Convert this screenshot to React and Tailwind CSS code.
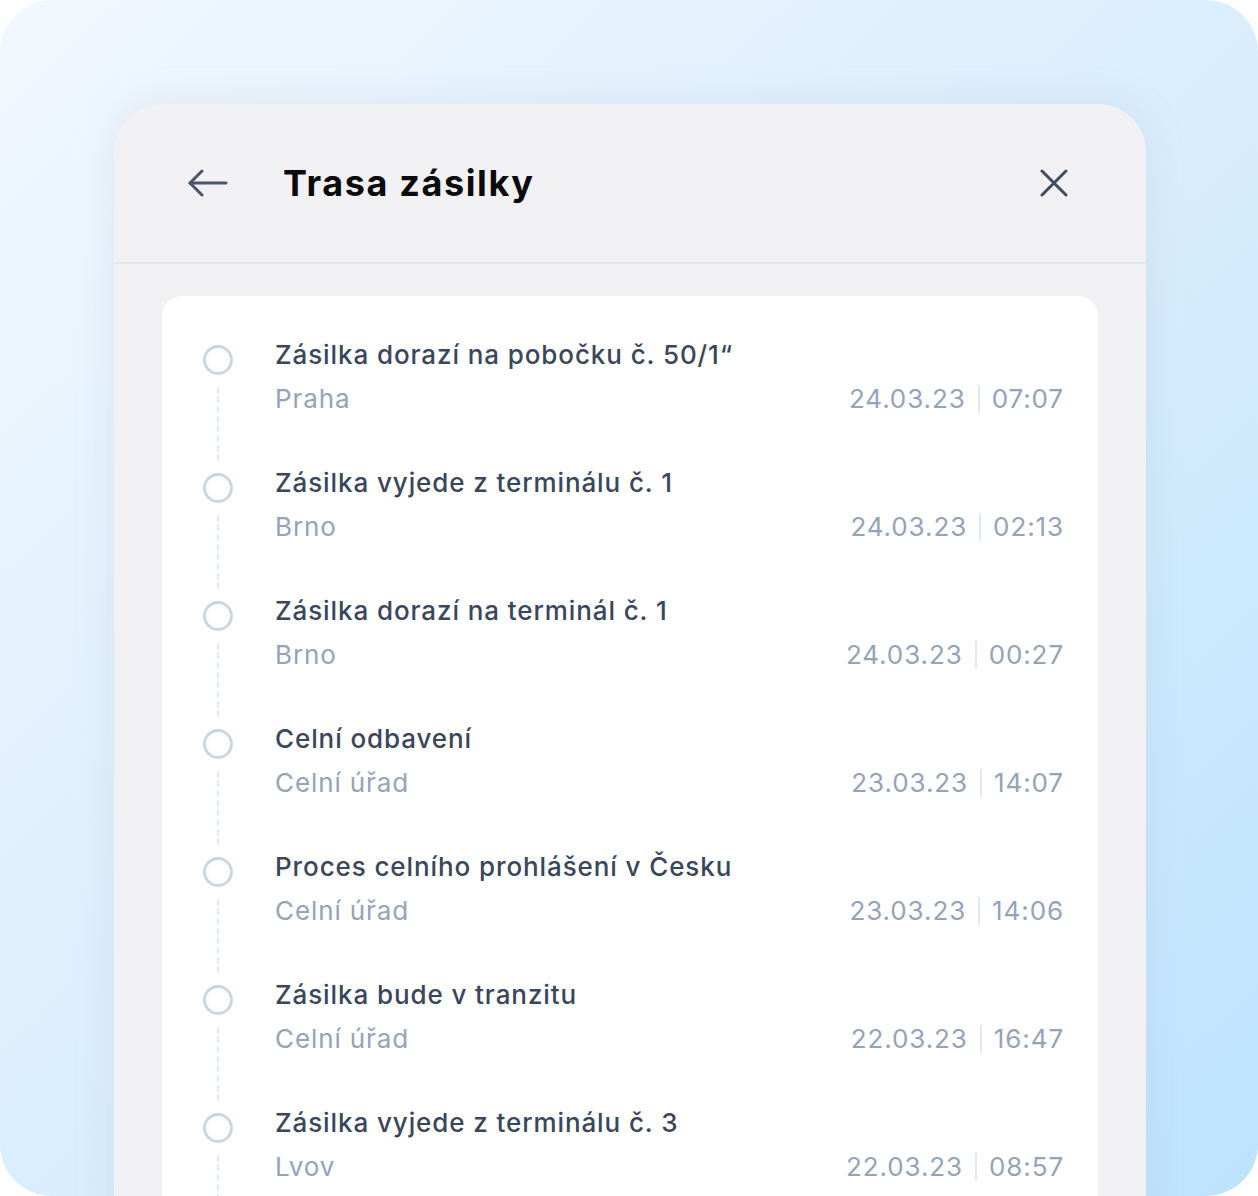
import React from 'react';

const events = [
  { title: 'Zásilka dorazí na pobočku č. 50/1“', place: 'Praha', date: '24.03.23', time: '07:07' },
  { title: 'Zásilka vyjede z terminálu č. 1', place: 'Brno', date: '24.03.23', time: '02:13' },
  { title: 'Zásilka dorazí na terminál č. 1', place: 'Brno', date: '24.03.23', time: '00:27' },
  { title: 'Celní odbavení', place: 'Celní úřad', date: '23.03.23', time: '14:07' },
  { title: 'Proces celního prohlášení v Česku', place: 'Celní úřad', date: '23.03.23', time: '14:06' },
  { title: 'Zásilka bude v tranzitu', place: 'Celní úřad', date: '22.03.23', time: '16:47' },
  { title: 'Zásilka vyjede z terminálu č. 3', place: 'Lvov', date: '22.03.23', time: '08:57' },
];

// timeline row: circle + dashed connector on the left, text on the right
const TimelineItem = ({ item }) => (
  <div className="flex">
    <div className="flex w-[30px] flex-col items-center pt-[8px] pb-[4px]">
      <div className="h-[30px] w-[30px] shrink-0 rounded-full border-[3px] border-[#cdd7e4]" />
      <div className="mt-[12px] flex-1 border-l-2 border-dashed border-[#e2e8f0]" />
    </div>
    <div className="ml-[42px] flex-1 pb-[48px] tracking-[0.9px]">
      <div className="text-[26px] leading-[36px] font-medium text-[#3a4659]">{item.title}</div>
      <div className="mt-[8px] flex items-center justify-between text-[26px] leading-[36px] text-[#94a3b8]">
        <span>{item.place}</span>
        <div className="flex items-center">
          <span>{item.date}</span>
          <span className="mx-[12px] h-[28px] w-[2px] bg-[#e2e8f0]" />
          <span>{item.time}</span>
        </div>
      </div>
    </div>
  </div>
);

const App = () => {
  return (
    <div
      className="h-[1196px] w-[1258px] overflow-hidden rounded-[52px] bg-gradient-to-br from-[#f2f8fe] via-[#daeefd] to-[#bde3fd] pt-[104px]"
      style={{ fontFamily: 'Inter, "Noto Sans", sans-serif' }}
    >
      <div className="ml-[114px] h-[1200px] w-[1032px] rounded-t-[48px] bg-[#f1f1f3] shadow-[0_0_40px_rgba(148,163,184,0.18)]">
        {/* Header */}
        <div className="flex h-[160px] items-center border-b-2 border-[#e4e8ee] pl-[74px] pr-[78px]">
          <svg width="40" height="28" viewBox="0 0 40 28" fill="none" stroke="#4a5568" strokeWidth="3" strokeLinecap="round" strokeLinejoin="round">
            <path d="M38 14H2" />
            <path d="M14 2L2 14l12 12" />
          </svg>
          <h1 className="ml-[55px] flex-1 text-[36px] leading-none font-bold tracking-[1.6px] text-[#0b0b0c]">
            Trasa zásilky
          </h1>
          <svg width="28" height="28" viewBox="0 0 28 28" fill="none" stroke="#3f4c60" strokeWidth="3" strokeLinecap="round">
            <path d="M2 2l24 24M26 2L2 26" />
          </svg>
        </div>

        {/* Timeline card */}
        <div className="mx-[48px] mt-[32px] rounded-[20px] bg-white pt-[41px] pl-[41px] pr-[34px]">
          {events.map((item, i) => (
            <TimelineItem key={i} item={item} />
          ))}
        </div>
      </div>
    </div>
  );
};

export default App;
